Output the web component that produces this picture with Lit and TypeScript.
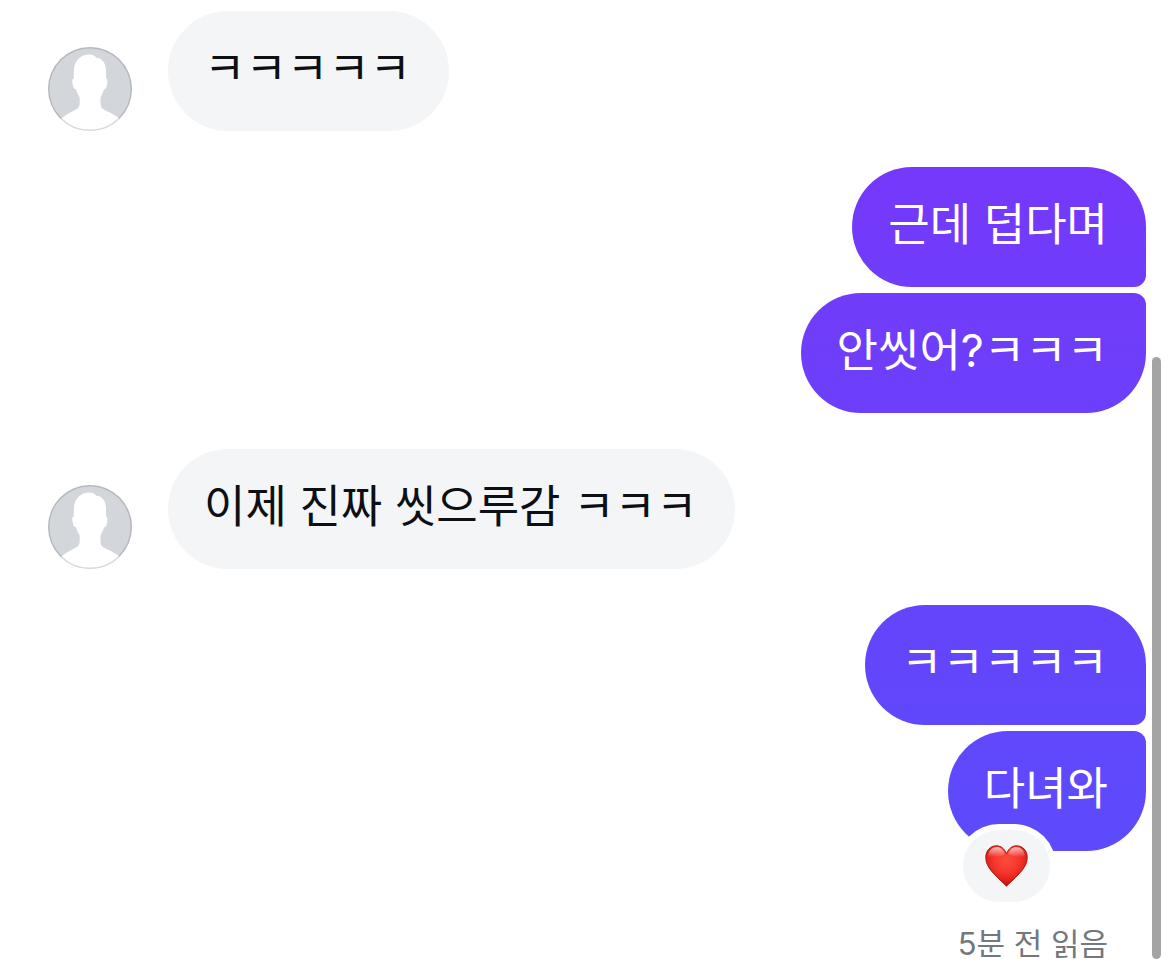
import { LitElement, html, css, svg, nothing } from "lit";
import { customElement, property } from "lit/decorators.js";

interface Message {
  text: string;
  reaction?: boolean;
}

interface MessageGroup {
  from: "them" | "me";
  messages: Message[];
}

const conversation: MessageGroup[] = [
  { from: "them", messages: [{ text: "ㅋㅋㅋㅋㅋ" }] },
  { from: "me", messages: [{ text: "근데 덥다며" }, { text: "안씻어?ㅋㅋㅋ" }] },
  { from: "them", messages: [{ text: "이제 진짜 씻으루감 ㅋㅋㅋ" }] },
  { from: "me", messages: [{ text: "ㅋㅋㅋㅋㅋ" }, { text: "다녀와", reaction: true }] },
];

@customElement("user-avatar")
export class UserAvatar extends LitElement {
  static styles = css`
    :host {
      display: block;
      flex: none;
      width: 84px;
      height: 84px;
    }
    svg {
      display: block;
      width: 100%;
      height: 100%;
    }
  `;

  render() {
    return html`<svg viewBox="0 0 84 84" aria-hidden="true">
      ${svg`
        <defs>
          <clipPath id="disc"><circle cx="42" cy="42" r="42"></circle></clipPath>
        </defs>
        <g clip-path="url(#disc)">
          <rect width="84" height="84" fill="#d3d6db"></rect>
          <path fill="#fff" d="M42 7.4C44.8 7.4 47.2 8.6 48.6 11.2C49.6 10.6 50.6 10.6 51.8 11.6C55.6 14 57.8 17.6 58 23L58.1 31.6C59.3 31.9 59.6 33 59.4 34.6C59.1 37.2 59 39.2 58.2 40.8C57.7 41.9 56.8 42.2 56 42.3C55.1 45.4 54 48 52.5 50.4V56.6C52.6 59.4 53.6 61.4 55.6 62.6C61 65.6 66.6 67.6 71.4 71.4L84 84H0L13.8 71.2C18 67.6 23 65.6 28 62.6C30.6 61 31.6 59 31.7 56.4V50.4C30 48 28.9 45.4 28 42.3C27 42.2 26.2 41.8 25.7 40.8C24.8 39 24.6 37 24.3 34.6C24.1 33 24.6 31.9 25.8 31.6L25.9 23C26.4 13.4 32.4 7.4 42 7.4Z"></path>
        </g>
        <circle cx="42" cy="42" r="41.25" fill="none" stroke="#000" stroke-opacity=".14" stroke-width="1.5"></circle>
      `}
    </svg>`;
  }
}

@customElement("heart-icon")
export class HeartIcon extends LitElement {
  static styles = css`
    :host {
      display: block;
      width: 43px;
      height: 42px;
    }
    svg {
      display: block;
      width: 100%;
      height: 100%;
    }
  `;

  render() {
    return html`<svg viewBox="0 0 43 42" aria-hidden="true">
      ${svg`
        <defs>
          <radialGradient id="body" gradientUnits="userSpaceOnUse" cx="21.5" cy="15" r="26">
            <stop offset="0" stop-color="#ff4b3e"></stop>
            <stop offset=".45" stop-color="#f6382d"></stop>
            <stop offset=".75" stop-color="#e2241b"></stop>
            <stop offset="1" stop-color="#b01410"></stop>
          </radialGradient>
          <linearGradient id="shine" x1="0" y1="0" x2="0" y2="1">
            <stop offset="0" stop-color="#fff" stop-opacity=".7"></stop>
            <stop offset="1" stop-color="#fff" stop-opacity="0"></stop>
          </linearGradient>
        </defs>
        <path fill="url(#body)" stroke="#b3160f" stroke-width="1" d="M21.5 8.6C19.4 3.6 15.8.8 11.6.8C5.2.8.8 5.6.8 12.4C.8 22.4 8.6 28.6 21.5 41.2C34.4 28.6 42.2 22.4 42.2 12.4C42.2 5.6 37.8.8 31.4.8C27.2.8 23.6 3.6 21.5 8.6Z"></path>
        <path fill="url(#shine)" d="M3.2 11.6C3.4 5.4 7.2 2 11.6 2C15.4 2 18.2 4.6 19.8 8.8C16 12.4 7 12.6 3.2 11.6Z"></path>
        <path fill="url(#shine)" d="M39.8 11.6C39.6 5.4 35.8 2 31.4 2C27.6 2 24.8 4.6 23.2 8.8C27 12.4 36 12.6 39.8 11.6Z"></path>
      `}
    </svg>`;
  }
}

@customElement("message-group")
export class MessageGroupElement extends LitElement {
  @property({ attribute: false }) group!: MessageGroup;

  static styles = css`
    :host {
      display: block;
    }
    .group {
      display: flex;
      align-items: flex-end;
      gap: 36px;
    }
    .group.me {
      justify-content: flex-end;
    }
    .stack {
      display: flex;
      flex-direction: column;
      align-items: flex-start;
      gap: 6px;
    }
    .me .stack {
      align-items: flex-end;
    }
    .bubble {
      position: relative;
      padding: 28px 38px 32px 36px;
      border-radius: 60px;
      background: #f3f5f7;
      color: #0c1014;
      font-size: 45px;
      line-height: 60px;
    }
    .me .bubble {
      background: linear-gradient(#7b34fa, #584efc) fixed;
      color: #fff;
    }
    .me .bubble:not(:last-child) {
      border-bottom-right-radius: 12px;
    }
    .me .bubble:not(:first-child) {
      border-top-right-radius: 12px;
    }
    /* The white ring separates the pill from the bubble it overlaps. */
    .reaction {
      position: absolute;
      left: 9px;
      top: 93px;
      padding: 6px;
      border: 0;
      border-radius: 42px;
      background: #fff;
    }
    .pill {
      display: block;
      padding: 15px 22px;
      border-radius: 36px;
      background: #f3f5f7;
    }
  `;

  render() {
    const { from, messages } = this.group;
    return html`<div class="group ${from}">
      ${from === "them" ? html`<user-avatar></user-avatar>` : nothing}
      <div class="stack">
        ${messages.map(
          (m) => html`<div class="bubble">
            ${m.text}${m.reaction
              ? html`<button class="reaction" type="button" aria-label="❤️">
                  <span class="pill"><heart-icon></heart-icon></span>
                </button>`
              : nothing}
          </div>`
        )}
      </div>
    </div>`;
  }
}

@customElement("app-root")
export class AppRoot extends LitElement {
  static styles = css`
    :host {
      display: grid;
      grid-template-columns: 1fr 24px;
      min-height: 100vh;
      background: #fff;
      font-family: Inter, "Noto Sans CJK KR", sans-serif;
    }
    .thread {
      display: flex;
      flex-direction: column;
      gap: 36px;
      padding: 11px 0 0 48px;
    }
    .receipt {
      margin: 36px 38px 0 0;
      text-align: right;
      color: #737780;
      font-size: 31px;
      line-height: 42px;
    }
    .track {
      display: flex;
      flex-direction: column;
      justify-content: flex-end;
      padding: 0 9px 12px 6px;
    }
    .thumb {
      height: 62vh;
      border-radius: 5px;
      background: #a4a4a4;
    }
  `;

  render() {
    return html`
      <main class="thread">
        ${conversation.map((g) => html`<message-group .group=${g}></message-group>`)}
        <div class="receipt">5분 전 읽음</div>
      </main>
      <div class="track"><div class="thumb"></div></div>
    `;
  }
}
